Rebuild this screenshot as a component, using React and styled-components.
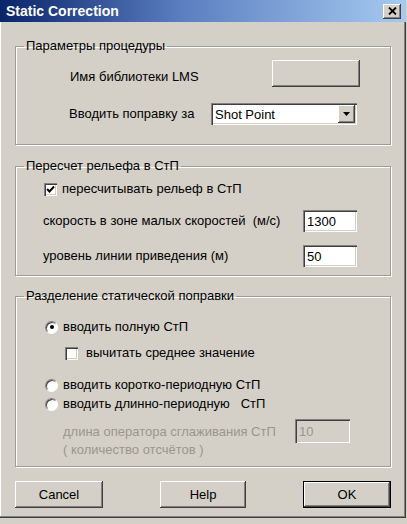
import React from 'react';
import styled, { createGlobalStyle } from 'styled-components';

const Global = createGlobalStyle`
  html, body {
    margin: 0;
    padding: 0;
    background: #d4d0c8;
  }
  body {
    font-family: "Liberation Sans", Arial, sans-serif;
    font-size: 13px;
    color: #000;
  }
`;

const Window = styled.div`
  width: 406px;
  height: 518px;
  box-sizing: border-box;
  background: #d4d0c8;
  display: flex;
  flex-direction: column;
  box-shadow: inset -1px -1px 0 #404040, inset -2px -2px 0 #808080, inset 1px 1px 0 #fff;
`;

const TitleBar = styled.div`
  height: 22px;
  flex-shrink: 0;
  display: flex;
  align-items: center;
  justify-content: space-between;
  padding: 0 5px 0 6px;
  background: linear-gradient(90deg, #0a246a 0%, #5b7fc0 45%, #a6caf0 100%);
  color: #fff;
  font-weight: bold;
  font-size: 14px;
`;

const CloseButton = styled.div`
  width: 18px;
  height: 15px;
  background: #d4d0c8;
  display: flex;
  align-items: center;
  justify-content: center;
  box-shadow: inset -1px -1px 0 #404040, inset 1px 1px 0 #fff, inset -2px -2px 0 #808080;
`;

const Body = styled.div`
  flex: 1;
  display: flex;
  flex-direction: column;
  padding: 16px 15px 0 15px;
`;

const Group = styled.fieldset`
  margin: ${p => p.$top}px 0 0 0;
  padding: ${p => p.$pad};
  border: 1px solid #a09c94;
  box-shadow: inset 1px 1px 0 #fff, 1px 1px 0 #fff;
  min-width: 0;
`;

const Legend = styled.legend`
  padding: 0 2px;
  margin-left: 8px;
  line-height: 16px;
`;

const Row = styled.div`
  display: flex;
  align-items: ${p => (p.$top ? 'flex-start' : 'center')};
  padding-left: ${p => p.$indent}px;
  margin-top: ${p => p.$gap || 0}px;
`;

const Label = styled.span`
  width: ${p => (p.$w ? p.$w + 'px' : 'auto')};
  flex-shrink: 0;
  color: ${p => (p.$disabled ? '#9a968e' : '#000')};
  line-height: 18px;
  padding-top: ${p => p.$pt || 0}px;
`;

const RaisedButton = styled.div`
  width: ${p => p.$w}px;
  height: 27px;
  box-sizing: border-box;
  background: #d4d0c8;
  display: flex;
  align-items: center;
  justify-content: center;
  box-shadow: ${p =>
    p.$default
      ? 'inset 0 0 0 1px #000, inset -2px -2px 0 #404040, inset 2px 2px 0 #fff, inset -3px -3px 0 #808080'
      : 'inset -1px -1px 0 #404040, inset 1px 1px 0 #fff, inset -2px -2px 0 #808080'};
`;

const Sunken = styled.div`
  width: ${p => p.$w}px;
  height: ${p => p.$h}px;
  box-sizing: border-box;
  background: ${p => (p.$disabled ? '#d4d0c8' : '#fff')};
  color: ${p => (p.$disabled ? '#9a968e' : '#000')};
  display: flex;
  align-items: center;
  padding-left: 4px;
  flex-shrink: 0;
  box-shadow: inset 1px 1px 0 #808080, inset 2px 2px 0 #404040, inset -1px -1px 0 #fff, inset -2px -2px 0 #d4d0c8;
`;

const Combo = styled(Sunken)`
  justify-content: space-between;
  padding-right: 2px;
`;

const Arrow = styled.div`
  width: 17px;
  height: 18px;
  background: #d4d0c8;
  display: flex;
  align-items: center;
  justify-content: center;
  box-shadow: inset -1px -1px 0 #404040, inset 1px 1px 0 #fff, inset -2px -2px 0 #808080;
`;

const Box = styled.span`
  width: 13px;
  height: 13px;
  box-sizing: border-box;
  background: #fff;
  margin-right: ${p => p.$mr}px;
  flex-shrink: 0;
  display: flex;
  align-items: center;
  justify-content: center;
  box-shadow: inset 1px 1px 0 #808080, inset 2px 2px 0 #404040, inset -1px -1px 0 #fff, inset -2px -2px 0 #d4d0c8;
`;

const Radio = styled.span`
  width: 13px;
  height: 13px;
  box-sizing: border-box;
  border-radius: 50%;
  background: #fff;
  margin-right: 5px;
  flex-shrink: 0;
  display: flex;
  align-items: center;
  justify-content: center;
  border: 1px solid;
  border-color: #808080 #fff #fff #808080;
  box-shadow: inset 1px 1px 0 #404040;
`;

const Dot = styled.span`
  width: 4px;
  height: 4px;
  border-radius: 50%;
  background: #000;
`;

const Footer = styled.div`
  display: flex;
  justify-content: space-between;
  margin-top: 14px;
`;

const Check = () => (
  <svg width="9" height="9" viewBox="0 0 9 9">
    <path d="M1 4 L3.5 6.5 L8 1.5" stroke="#000" strokeWidth="2" fill="none" />
  </svg>
);

export default function App() {
  return (
    <>
      <Global />
      <Window>
        <TitleBar>
          <span>Static Correction</span>
          <CloseButton>
            <svg width="9" height="8" viewBox="0 0 9 8">
              <path d="M1 0.5 L8 7.5 M8 0.5 L1 7.5" stroke="#000" strokeWidth="1.8" />
            </svg>
          </CloseButton>
        </TitleBar>
        <Body>
          <Group $top={0} $pad="6px 0 19px 0">
            <Legend>Параметры процедуры</Legend>
            <Row $indent={54}>
              <Label $w={202} $pt={6}>Имя библиотеки LMS</Label>
              <RaisedButton $w={88} />
            </Row>
            <Row $indent={53} $gap={16}>
              <Label $w={142}>Вводить поправку за</Label>
              <Combo $w={146} $h={22}>
                <span>Shot Point</span>
                <Arrow>
                  <svg width="7" height="4" viewBox="0 0 7 4">
                    <path d="M0 0 H7 L3.5 4 Z" fill="#000" />
                  </svg>
                </Arrow>
              </Combo>
            </Row>
          </Group>

          <Group $top={13} $pad="6px 0 8px 0">
            <Legend>Пересчет рельефа в СтП</Legend>
            <Row $indent={28}>
              <Box $mr={5}><Check /></Box>
              <Label>пересчитывать рельеф в СтП</Label>
            </Row>
            <Row $indent={27} $gap={12}>
              <Label $w={260}>скорость в зоне малых скоростей&nbsp; (м/с)</Label>
              <Sunken $w={54} $h={22}>1300</Sunken>
            </Row>
            <Row $indent={27} $gap={13}>
              <Label $w={260}>уровень линии приведения (м)</Label>
              <Sunken $w={54} $h={22}>50</Sunken>
            </Row>
          </Group>

          <Group $top={12} $pad="14px 0 7px 0">
            <Legend>Разделение статической поправки</Legend>
            <Row $indent={29}>
              <Radio><Dot /></Radio>
              <Label>вводить полную СтП</Label>
            </Row>
            <Row $indent={49} $gap={8}>
              <Box $mr={8} />
              <Label>вычитать среднее значение</Label>
            </Row>
            <Row $indent={29} $gap={14}>
              <Radio />
              <Label>вводить коротко-периодную СтП</Label>
            </Row>
            <Row $indent={29} $gap={1}>
              <Radio />
              <Label>вводить длинно-периодную&nbsp;&nbsp; СтП</Label>
            </Row>
            <Row $indent={47} $gap={6} $top>
              <Label $w={232} $pt={4} $disabled>
                длина оператора сглаживания СтП
                <br />( количество отсчётов )
              </Label>
              <Sunken $w={55} $h={24} $disabled>10</Sunken>
            </Row>
          </Group>

          <Footer>
            <RaisedButton $w={88}>Cancel</RaisedButton>
            <RaisedButton $w={86}>Help</RaisedButton>
            <RaisedButton $w={88} $default>OK</RaisedButton>
          </Footer>
        </Body>
      </Window>
    </>
  );
}
